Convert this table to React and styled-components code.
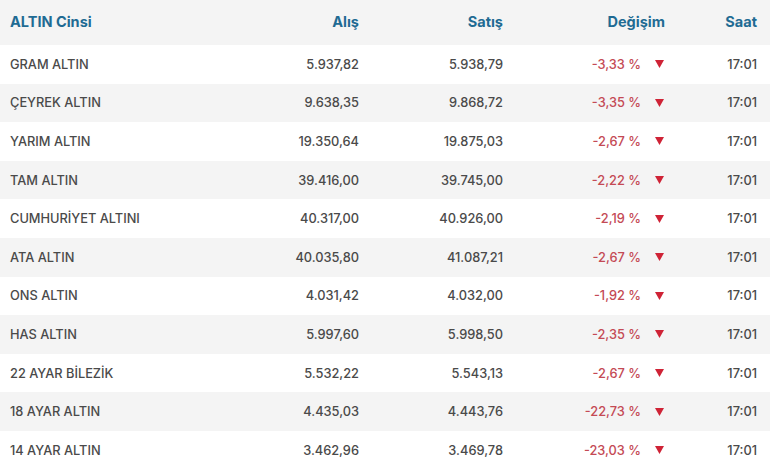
import React from "react";
import styled, { createGlobalStyle } from "styled-components";

const GlobalStyle = createGlobalStyle`
  html, body {
    margin: 0;
    padding: 0;
    background: #ffffff;
  }
  body {
    font-family: Inter, "Noto Sans", "Liberation Sans", sans-serif;
  }
`;

const rows = [
  { name: "GRAM ALTIN", buy: "5.937,82", sell: "5.938,79", change: "-3,33 %" },
  { name: "ÇEYREK ALTIN", buy: "9.638,35", sell: "9.868,72", change: "-3,35 %" },
  { name: "YARIM ALTIN", buy: "19.350,64", sell: "19.875,03", change: "-2,67 %" },
  { name: "TAM ALTIN", buy: "39.416,00", sell: "39.745,00", change: "-2,22 %" },
  { name: "CUMHURİYET ALTINI", buy: "40.317,00", sell: "40.926,00", change: "-2,19 %" },
  { name: "ATA ALTIN", buy: "40.035,80", sell: "41.087,21", change: "-2,67 %" },
  { name: "ONS ALTIN", buy: "4.031,42", sell: "4.032,00", change: "-1,92 %" },
  { name: "HAS ALTIN", buy: "5.997,60", sell: "5.998,50", change: "-2,35 %" },
  { name: "22 AYAR BİLEZİK", buy: "5.532,22", sell: "5.543,13", change: "-2,67 %" },
  { name: "18 AYAR ALTIN", buy: "4.435,03", sell: "4.443,76", change: "-22,73 %" },
  { name: "14 AYAR ALTIN", buy: "3.462,96", sell: "3.469,78", change: "-23,03 %" },
];

const Table = styled.div`
  width: 770px;
  height: 470px;
  overflow: hidden;
`;

const Row = styled.div`
  display: grid;
  grid-template-columns: 200px 149px 144px 162px 92px;
  align-items: center;
  padding: 0 13px 0 10px;
  height: ${(p) => (p.$head ? "45px" : "38.6px")};
  background: ${(p) => (p.$shade ? "#f4f4f4" : "#ffffff")};
`;

const HeadCell = styled.div`
  font-size: 14.5px;
  font-weight: 700;
  color: #1f6b93;
  text-align: ${(p) => (p.$left ? "left" : "right")};
  white-space: nowrap;
  padding-bottom: 2px;
`;

const Cell = styled.div`
  font-size: 12.8px;
  font-weight: 500;
  color: #4a4a4a;
  text-align: ${(p) => (p.$left ? "left" : "right")};
  white-space: nowrap;
`;

const ChangeCell = styled.div`
  display: flex;
  justify-content: flex-end;
  align-items: center;
  gap: 14px;
  font-size: 12.8px;
  font-weight: 500;
  color: #c44a55;
  white-space: nowrap;
`;

const Arrow = styled.svg`
  width: 9px;
  height: 8px;
  margin-right: 1px;
`;

const Down = () => (
  <Arrow viewBox="0 0 9 8">
    <polygon points="0,0 9,0 4.5,8" fill="#cf2336" />
  </Arrow>
);

export default function App() {
  return (
    <>
      <GlobalStyle />
      <Table>
        <Row $head $shade>
          <HeadCell $left>ALTIN Cinsi</HeadCell>
          <HeadCell>Alış</HeadCell>
          <HeadCell>Satış</HeadCell>
          <HeadCell>Değişim</HeadCell>
          <HeadCell>Saat</HeadCell>
        </Row>
        {rows.map((r, i) => (
          <Row key={r.name} $shade={i % 2 === 1}>
            <Cell $left>{r.name}</Cell>
            <Cell>{r.buy}</Cell>
            <Cell>{r.sell}</Cell>
            <ChangeCell>
              {r.change}
              <Down />
            </ChangeCell>
            <Cell>17:01</Cell>
          </Row>
        ))}
      </Table>
    </>
  );
}
